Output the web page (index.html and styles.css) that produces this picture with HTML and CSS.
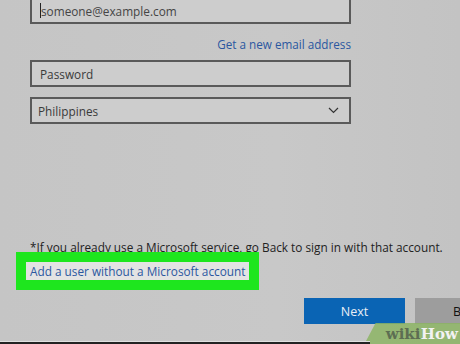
FILE: index.html
```html
<!DOCTYPE html>
<html lang="en">
<head>
  <meta charset="utf-8" />
  <title>Add a user</title>
  <meta name="viewport" content="width=device-width, initial-scale=1" />
  <link rel="stylesheet" href="styles.css">
</head>
<body>
  <div class="page">
    <div class="field email"><span class="caret"></span>someone@example.com</div>
    <div class="newmail"><a href="#">Get a new email address</a></div>
    <div class="field">Password</div>
    <div class="field select">
      <span>Philippines</span>
      <svg width="11" height="7" viewBox="0 0 11 7"><path d="M1 1 L5.5 5.5 L10 1" fill="none" stroke="#333" stroke-width="1.2"/></svg>
    </div>

    <div class="note">*If you already use a Microsoft service, go Back to sign in with that account.</div>
    <div class="nouser"><a href="#">Add a user without a Microsoft account</a></div>

    <div class="buttons">
      <button class="next">Next</button>
      <button class="back">Back</button>
    </div>
  </div>

  <div class="wm"><span class="wiki">wiki</span><span class="how">How</span></div>
  <div class="bottomline"></div>
</body>
</html>
```
FILE: styles.css
```css
html, body {
  margin:0;
  width:460px;
  height:344px;
  overflow:hidden;
}
body {
  background:linear-gradient(90deg,#c5c5c5 0%,#c8c8c8 60%,#c3c3c3 100%);
  font-family:'Open Sans','Noto Sans',sans-serif;
  color:#333;
  position:relative;
}
.page {
  padding-left:30px;
  display:flex;
  flex-direction:column;
}
.field {
  width:321px;
  height:27px;
  box-sizing:border-box;
  border:2px solid #5a5a5a;
  background:#cdcdcd;
  display:flex;
  align-items:center;
  padding-left:8px;
  font-size:11.8px;
  color:#3a3a3a;
}
.email {
  margin-top:-3px;
  color:#454545;
}
.caret {
  width:1px;
  height:15px;
  background:#222;
}
.newmail {
  width:321px;
  text-align:right;
  margin-top:11px;
  margin-bottom:7px;
  font-size:11.7px;
  line-height:18px;
}
.newmail a, .nouser a {
  color:#2b57a0;
  text-decoration:none;
}
.select {
  margin-top:10px;
  justify-content:space-between;
  padding-left:6px;
  padding-right:10px;
}
.note {
  margin-top:114px;
  font-size:11.8px;
  line-height:18px;
  color:#222;
  white-space:nowrap;
}
.nouser {
  align-self:flex-start;
  margin-top:6px;
  margin-left:-4px;
  padding:0 4px;
  background:#e3e3e3;
  outline:10px solid #1ee61e;
  font-size:11.8px;
  line-height:18px;
}
.buttons {
  display:flex;
  gap:10px;
  margin-top:18px;
  margin-left:274px;
}
button {
  height:26px;
  border:none;
  font-family:inherit;
  font-size:12.5px;
  padding:0;
  flex-shrink:0;
}
.next {
  width:101px;
  background:#0a64b4;
  color:#e8eef6;
}
.back {
  width:101px;
  background:#9d9d9d;
  color:#111;
  text-align:left;
  padding-left:38px;
}
.wm {
  position:absolute;
  right:-8px;
  bottom:0;
  width:98px;
  height:21px;
  background:rgba(140,180,100,.85);
  transform:skewX(-28deg);
  font-family:'DejaVu Serif',serif;
  font-weight:bold;
  font-size:15px;
  line-height:22px;
  padding-left:16px;
  box-sizing:border-box;
  white-space:nowrap;
}
.wm span {
  display:inline-block;
  transform:skewX(28deg);
}
.wiki { color:#5d6e52; }
.how { color:#f2f2f2; }
.bottomline {
  position:absolute;
  left:0;
  bottom:0;
  width:370px;
  height:2px;
  background:#222;
  border-top:1px solid #e0e0e0;
}
```
